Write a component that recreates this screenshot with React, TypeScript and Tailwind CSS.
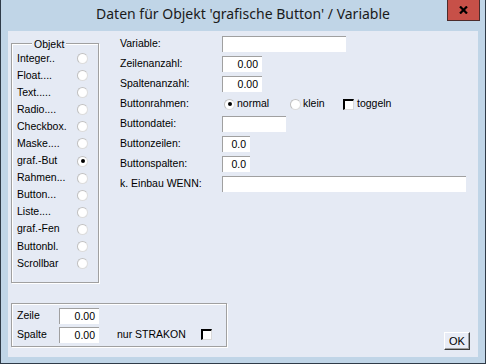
/** Dialog: "Daten für Objekt 'grafische Button' / Variable" — classic Windows-style form. */
import type { ReactNode } from "react";

const objekte = [
  "Integer..",
  "Float....",
  "Text.....",
  "Radio....",
  "Checkbox.",
  "Maske....",
  "graf.-But",
  "Rahmen...",
  "Button...",
  "Liste....",
  "graf.-Fen",
  "Buttonbl.",
  "Scrollbar",
];

function Radio({ checked }: { checked?: boolean }) {
  return (
    <span className="flex h-[11px] w-[11px] shrink-0 items-center justify-center rounded-full border border-[#dcdcdc] border-l-[#c0c0c0] border-t-[#c0c0c0] bg-white">
      {checked && <span className="h-[4px] w-[4px] rounded-full bg-black" />}
    </span>
  );
}

function Check() {
  return (
    <span className="block h-[11px] w-[11px] shrink-0 border-b border-l-2 border-r border-t-2 border-b-[#dadada] border-l-black border-r-[#dadada] border-t-black bg-white" />
  );
}

// sunken edit field, width passed in full
function Field({ className, value }: { className: string; value?: string }) {
  return (
    <div
      className={`h-[16px] border-l border-t border-[#a0a0a0] bg-white pr-[4px] text-right leading-[15px] ${className}`}
    >
      {value}
    </div>
  );
}

function Row({ label, children }: { label: string; children: ReactNode }) {
  return (
    <div className="flex h-[20px] items-center">
      <span className="w-[102px] shrink-0">{label}</span>
      {children}
    </div>
  );
}

export default function App() {
  return (
    <div
      className="flex h-[364px] w-[486px] flex-col border-x border-b border-[#2f3b48] bg-[#c0d5e7] text-[10.5px] text-black"
      style={{ fontFamily: '"Liberation Sans", Arial, sans-serif' }}
    >
      {/* title bar */}
      <div className="grid h-[31px] shrink-0 grid-cols-[1fr_auto_1fr]">
        <div />
        <div
          className="pt-[4px] text-[14px] leading-[20px] text-[#1a1a1a]"
          style={{ fontFamily: '"Noto Sans", "Open Sans", sans-serif' }}
        >
          Daten für Objekt 'grafische Button' / Variable
        </div>
        <div className="flex justify-end pr-[5px]">
          <div className="flex h-[21px] w-[33px] items-center justify-center border-x border-b border-[#4b2c2c] bg-[#c75048]">
            <svg width="9" height="8" viewBox="0 0 9 8">
              <path d="M1 0.5 L8 7.5 M8 0.5 L1 7.5" stroke="#000" strokeWidth="2.2" />
            </svg>
          </div>
        </div>
      </div>

      {/* client area */}
      <div className="mx-[7px] flex h-[326px] flex-col bg-[#e5eaf4]">
        <div className="flex h-[272px] shrink-0">
          <div className="pl-[3px] pt-[12px]">
            <div className="relative h-[240px] w-[88px] border border-[#a0a0a0] pl-[5px] pt-[6px] shadow-[1px_1px_0_#fff,inset_1px_1px_0_#fff]">
              <span className="absolute left-[20px] top-[-6px] bg-[#e5eaf4] px-[2px] leading-[12px]">
                Objekt
              </span>
              {objekte.map((o, i) => (
                <div key={o} className="flex h-[17.08px] items-center">
                  <span className="w-[60px] shrink-0">{o}</span>
                  <Radio checked={i === 6} />
                </div>
              ))}
            </div>
          </div>

          <div className="ml-[21px] pt-[3px]">
            <Row label="Variable:">
              <Field className="w-[124px]" />
            </Row>
            <Row label="Zeilenanzahl:">
              <Field className="w-[40px]" value="0.00" />
            </Row>
            <Row label="Spaltenanzahl:">
              <Field className="w-[40px]" value="0.00" />
            </Row>
            <Row label="Buttonrahmen:">
              <div className="flex items-center pl-[2px]">
                <div className="flex w-[66px] items-center gap-[2px]">
                  <Radio checked />
                  <span>normal</span>
                </div>
                <div className="flex w-[53px] items-center gap-[2px]">
                  <Radio />
                  <span>klein</span>
                </div>
                <div className="flex items-center gap-[3px]">
                  <Check />
                  <span>toggeln</span>
                </div>
              </div>
            </Row>
            <Row label="Buttondatei:">
              <Field className="w-[64px]" />
            </Row>
            <Row label="Buttonzeilen:">
              <Field className="w-[28px]" value="0.0" />
            </Row>
            <Row label="Buttonspalten:">
              <Field className="w-[28px]" value="0.0" />
            </Row>
            <Row label="k. Einbau WENN:">
              <Field className="w-[244px]" />
            </Row>
          </div>
        </div>

        <div className="flex items-start pl-[3px] pr-[8px]">
          <div className="h-[44px] w-[216px] border border-[#a0a0a0] pl-[5px] pt-[2px] shadow-[1px_1px_0_#fff,inset_1px_1px_0_#fff]">
            <div className="flex h-[19px] items-center">
              <span className="w-[42px]">Zeile</span>
              <Field className="w-[40px]" value="0.00" />
            </div>
            <div className="flex h-[19px] items-center">
              <span className="w-[42px]">Spalte</span>
              <Field className="w-[40px]" value="0.00" />
              <span className="ml-[18px] w-[84px]">nur STRAKON</span>
              <Check />
            </div>
          </div>
          <button className="ml-auto mt-[29px] flex h-[18px] w-[26px] items-center justify-center border-b border-l border-r border-t border-b-[#3c3c3c] border-l-white border-r-[#3c3c3c] border-t-white bg-[#e8ecf6] text-[11px] shadow-[inset_-1px_-1px_0_#a0a0a0]">
            OK
          </button>
        </div>
      </div>
    </div>
  );
}
